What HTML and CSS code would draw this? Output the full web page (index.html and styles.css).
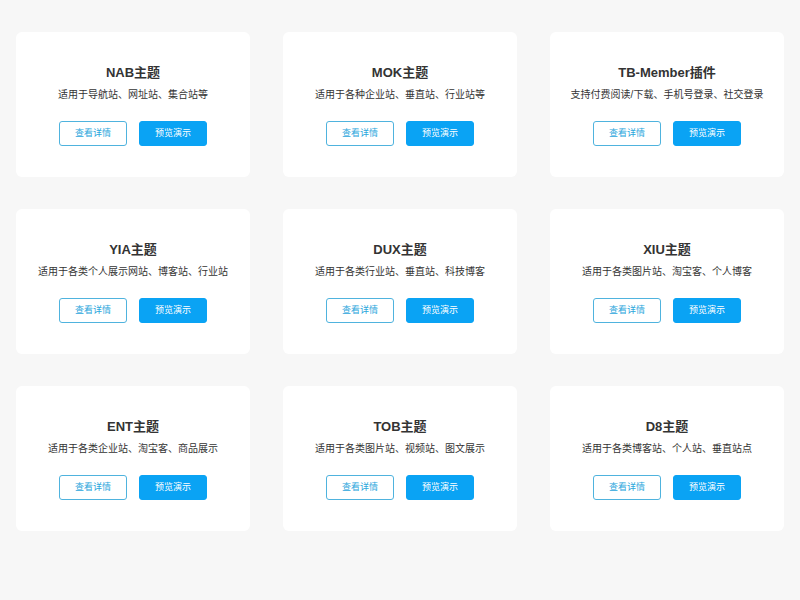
FILE: index.html
```html
<!DOCTYPE html>
<html lang="zh">
<head>
<meta charset="utf-8">
<link rel="stylesheet" href="styles.css">
</head>
<body>
<div class="grid">
  <div class="card"><h3 class="title">NAB主题</h3><p class="desc">适用于导航站、网址站、集合站等</p><div class="btns"><a class="btn btn-outline">查看详情</a><a class="btn btn-fill">预览演示</a></div></div>
  <div class="card"><h3 class="title">MOK主题</h3><p class="desc">适用于各种企业站、垂直站、行业站等</p><div class="btns"><a class="btn btn-outline">查看详情</a><a class="btn btn-fill">预览演示</a></div></div>
  <div class="card"><h3 class="title">TB-Member插件</h3><p class="desc">支持付费阅读/下载、手机号登录、社交登录</p><div class="btns"><a class="btn btn-outline">查看详情</a><a class="btn btn-fill">预览演示</a></div></div>
  <div class="card"><h3 class="title">YIA主题</h3><p class="desc">适用于各类个人展示网站、博客站、行业站</p><div class="btns"><a class="btn btn-outline">查看详情</a><a class="btn btn-fill">预览演示</a></div></div>
  <div class="card"><h3 class="title">DUX主题</h3><p class="desc">适用于各类行业站、垂直站、科技博客</p><div class="btns"><a class="btn btn-outline">查看详情</a><a class="btn btn-fill">预览演示</a></div></div>
  <div class="card"><h3 class="title">XIU主题</h3><p class="desc">适用于各类图片站、淘宝客、个人博客</p><div class="btns"><a class="btn btn-outline">查看详情</a><a class="btn btn-fill">预览演示</a></div></div>
  <div class="card"><h3 class="title">ENT主题</h3><p class="desc">适用于各类企业站、淘宝客、商品展示</p><div class="btns"><a class="btn btn-outline">查看详情</a><a class="btn btn-fill">预览演示</a></div></div>
  <div class="card"><h3 class="title">TOB主题</h3><p class="desc">适用于各类图片站、视频站、图文展示</p><div class="btns"><a class="btn btn-outline">查看详情</a><a class="btn btn-fill">预览演示</a></div></div>
  <div class="card"><h3 class="title">D8主题</h3><p class="desc">适用于各类博客站、个人站、垂直站点</p><div class="btns"><a class="btn btn-outline">查看详情</a><a class="btn btn-fill">预览演示</a></div></div>
</div>
</body>
</html>
```
FILE: styles.css
```css
html, body {
  margin: 0;
  padding: 0;
  background: #f7f7f7;
  font-family: "Liberation Sans", "Noto Sans CJK SC", sans-serif;
  color: #333;
}
.grid {
  display: grid;
  grid-template-columns: repeat(3, 234px);
  column-gap: 33px;
  row-gap: 32px;
  padding: 32px 16px;
}
.card {
  background: #fff;
  border-radius: 6px;
  height: 145px;
  box-sizing: border-box;
  padding-top: 31px;
  text-align: center;
}
.title {
  margin: 0;
  font-size: 13px;
  line-height: 20px;
  font-weight: bold;
  color: #333;
}
.desc {
  margin: 4px 0 0;
  font-size: 10px;
  line-height: 16px;
  color: #333;
}
.btns {
  display: flex;
  justify-content: center;
  gap: 12px;
  margin-top: 18px;
}
.btn {
  box-sizing: border-box;
  width: 68px;
  height: 25px;
  line-height: 23px;
  font-size: 9px;
  border-radius: 3px;
  border: 1px solid #4fb3de;
  text-decoration: none;
}
.btn-outline {
  color: #2aa6dc;
  background: #fff;
}
.btn-fill {
  background: #0aa3f4;
  border-color: #0aa3f4;
  color: #fff;
}
```
